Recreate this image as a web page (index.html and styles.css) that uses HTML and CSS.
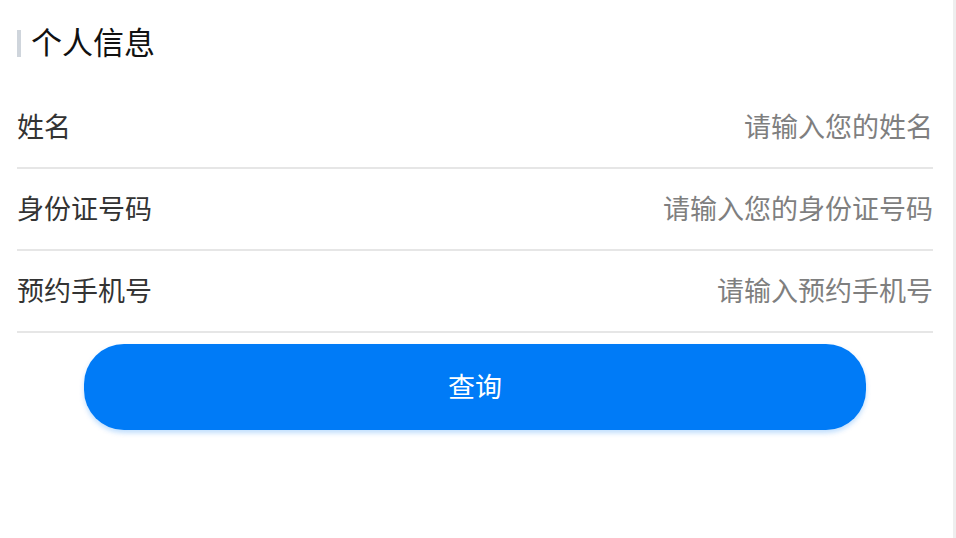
FILE: index.html
```html
<!DOCTYPE html>
<html lang="zh-CN">
<head>
<meta charset="utf-8">
<title>个人信息</title>
<link rel="stylesheet" href="styles.css">
</head>
<body>
<div class="page">
  <div class="title"><span class="title-bar"></span><span class="title-text">个人信息</span></div>
  <div class="row"><span class="label">姓名</span><input class="field" type="text" placeholder="请输入您的姓名"></div>
  <div class="row"><span class="label">身份证号码</span><input class="field" type="text" placeholder="请输入您的身份证号码"></div>
  <div class="row"><span class="label">预约手机号</span><input class="field" type="text" placeholder="请输入预约手机号"></div>
  <div class="actions"><button class="btn" type="button">查询</button></div>
</div>
<div class="edge"></div>
</body>
</html>
```

FILE: styles.css
```css
html, body {
  margin: 0;
  padding: 0;
  background: #fff;
}
body {
  font-family: "Noto Sans CJK SC", "Noto Sans", sans-serif;
  height: 538px;
  overflow: hidden;
}
.page {
  padding: 0 23px 0 17px;
}
.title {
  display: flex;
  align-items: center;
  height: 38px;
  padding: 24px 0 25px;
}
.title-bar {
  width: 4px;
  height: 27px;
  background: #cfd5dc;
  margin-right: 10px;
}
.title-text {
  font-size: 31px;
  line-height: 38px;
  color: #111;
  position: relative;
  top: -2px;
}
.row {
  display: flex;
  align-items: center;
  justify-content: space-between;
  height: 77px;
  padding-bottom: 3px;
  border-bottom: 2px solid #e6e6e6;
}
.label {
  font-size: 27px;
  color: #333;
  white-space: nowrap;
}
.field {
  flex: 1;
  border: none;
  outline: none;
  background: transparent;
  text-align: right;
  font-family: inherit;
  font-size: 27px;
  color: #333;
  padding: 0;
  margin-left: 20px;
}
.field::placeholder {
  color: #7f7f7f;
}
.actions {
  display: flex;
  justify-content: center;
  padding-top: 11px;
}
.btn {
  width: 782px;
  height: 86px;
  padding: 0 0 4px;
  border: none;
  border-radius: 40px;
  background: #007bf7;
  color: #fff;
  font-family: inherit;
  font-size: 27px;
  box-shadow: 0 3px 5px rgba(0, 123, 247, 0.25);
}
.edge {
  position: fixed;
  top: 0;
  right: 0;
  width: 3px;
  height: 538px;
  background: #eeeeee;
}
```
